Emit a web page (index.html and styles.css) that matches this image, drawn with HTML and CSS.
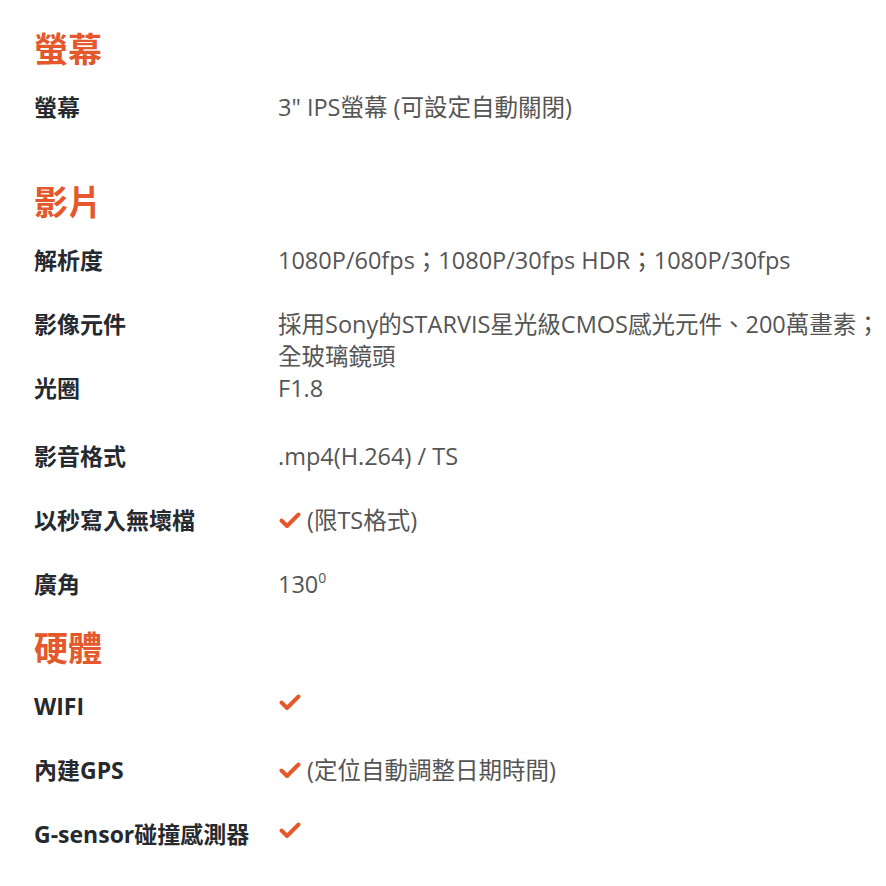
FILE: index.html
```html
<!DOCTYPE html>
<html lang="zh-TW">
<head>
    <meta charset="UTF-8">
    <title>規格</title>
    <meta name="viewport" content="width=device-width, initial-scale=1.0">
    <link rel="stylesheet" href="styles.css">
</head>
<body>
<div class="spec-page">
    <section class="spec-section spec-section--spaced">
        <h2 class="spec-title">螢幕</h2>
        <div class="spec-row">
            <div class="spec-label">螢幕</div>
            <div class="spec-value">3" IPS螢幕 (可設定自動關閉)</div>
        </div>
    </section>

    <section class="spec-section">
        <h2 class="spec-title">影片</h2>
        <div class="spec-row">
            <div class="spec-label">解析度</div>
            <div class="spec-value">1080P/60fps；1080P/30fps HDR；1080P/30fps</div>
        </div>
        <div class="spec-row spec-row--wrap">
            <div class="spec-label">影像元件</div>
            <div class="spec-value">採用Sony的STARVIS星光級CMOS感光元件、200萬畫素；<br>全玻璃鏡頭</div>
        </div>
        <div class="spec-row spec-row--tall">
            <div class="spec-label">光圈</div>
            <div class="spec-value">F1.8</div>
        </div>
        <div class="spec-row">
            <div class="spec-label">影音格式</div>
            <div class="spec-value">.mp4(H.264) / TS</div>
        </div>
        <div class="spec-row">
            <div class="spec-label">以秒寫入無壞檔</div>
            <div class="spec-value">
                <svg class="check" viewBox="0 0 24 24"><path d="M3.5 12.5l5.5 5.5L20.5 6.5"/></svg>
                <span>(限TS格式)</span>
            </div>
        </div>
        <div class="spec-row">
            <div class="spec-label">廣角</div>
            <div class="spec-value"><span>130<sup>0</sup></span></div>
        </div>
    </section>

    <section class="spec-section">
        <h2 class="spec-title">硬體</h2>
        <div class="spec-row">
            <div class="spec-label">WIFI</div>
            <div class="spec-value">
                <svg class="check" viewBox="0 0 24 24"><path d="M3.5 12.5l5.5 5.5L20.5 6.5"/></svg>
            </div>
        </div>
        <div class="spec-row">
            <div class="spec-label">內建GPS</div>
            <div class="spec-value">
                <svg class="check" viewBox="0 0 24 24"><path d="M3.5 12.5l5.5 5.5L20.5 6.5"/></svg>
                <span>(定位自動調整日期時間)</span>
            </div>
        </div>
        <div class="spec-row">
            <div class="spec-label">G-sensor碰撞感測器</div>
            <div class="spec-value">
                <svg class="check" viewBox="0 0 24 24"><path d="M3.5 12.5l5.5 5.5L20.5 6.5"/></svg>
            </div>
        </div>
    </section>
</div>
</body>
</html>
```

FILE: styles.css
```css
body, html {
    font-family: 'Open Sans', 'Noto Sans CJK TC', sans-serif;
    background-color: #ffffff;
    margin: 0;
    padding: 0;
    color: #555555;
}
.spec-page {
    padding: 27px 0 0 34px;
}
.spec-section--spaced {
    margin-bottom: 31px;
}
.spec-title {
    margin: 0 0 20px;
    font-size: 34px;
    line-height: 44px;
    font-weight: 700;
    color: #e4582b;
}
.spec-row {
    display: grid;
    grid-template-columns: 244px 1fr;
    padding-bottom: 32px;
    font-size: 23.5px;
    line-height: 32px;
}
.spec-row--wrap {
    padding-bottom: 0;
}
.spec-row--tall {
    padding-bottom: 36px;
}
.spec-section .spec-row:last-child {
    padding-bottom: 26px;
}
.spec-label {
    font-size: 23px;
    font-weight: 700;
    color: #262a2e;
    white-space: nowrap;
}
.spec-value {
    display: flex;
    align-items: center;
    gap: 5px;
    height: fit-content;
    white-space: nowrap;
}
.spec-row--wrap .spec-value {
    display: block;
}
.spec-value sup {
    font-size: 14px;
    line-height: 0;
    vertical-align: 10px;
}
.check {
    width: 24px;
    height: 24px;
    fill: none;
    stroke: #e4582b;
    stroke-width: 4;
    stroke-linecap: round;
    stroke-linejoin: round;
}
```
